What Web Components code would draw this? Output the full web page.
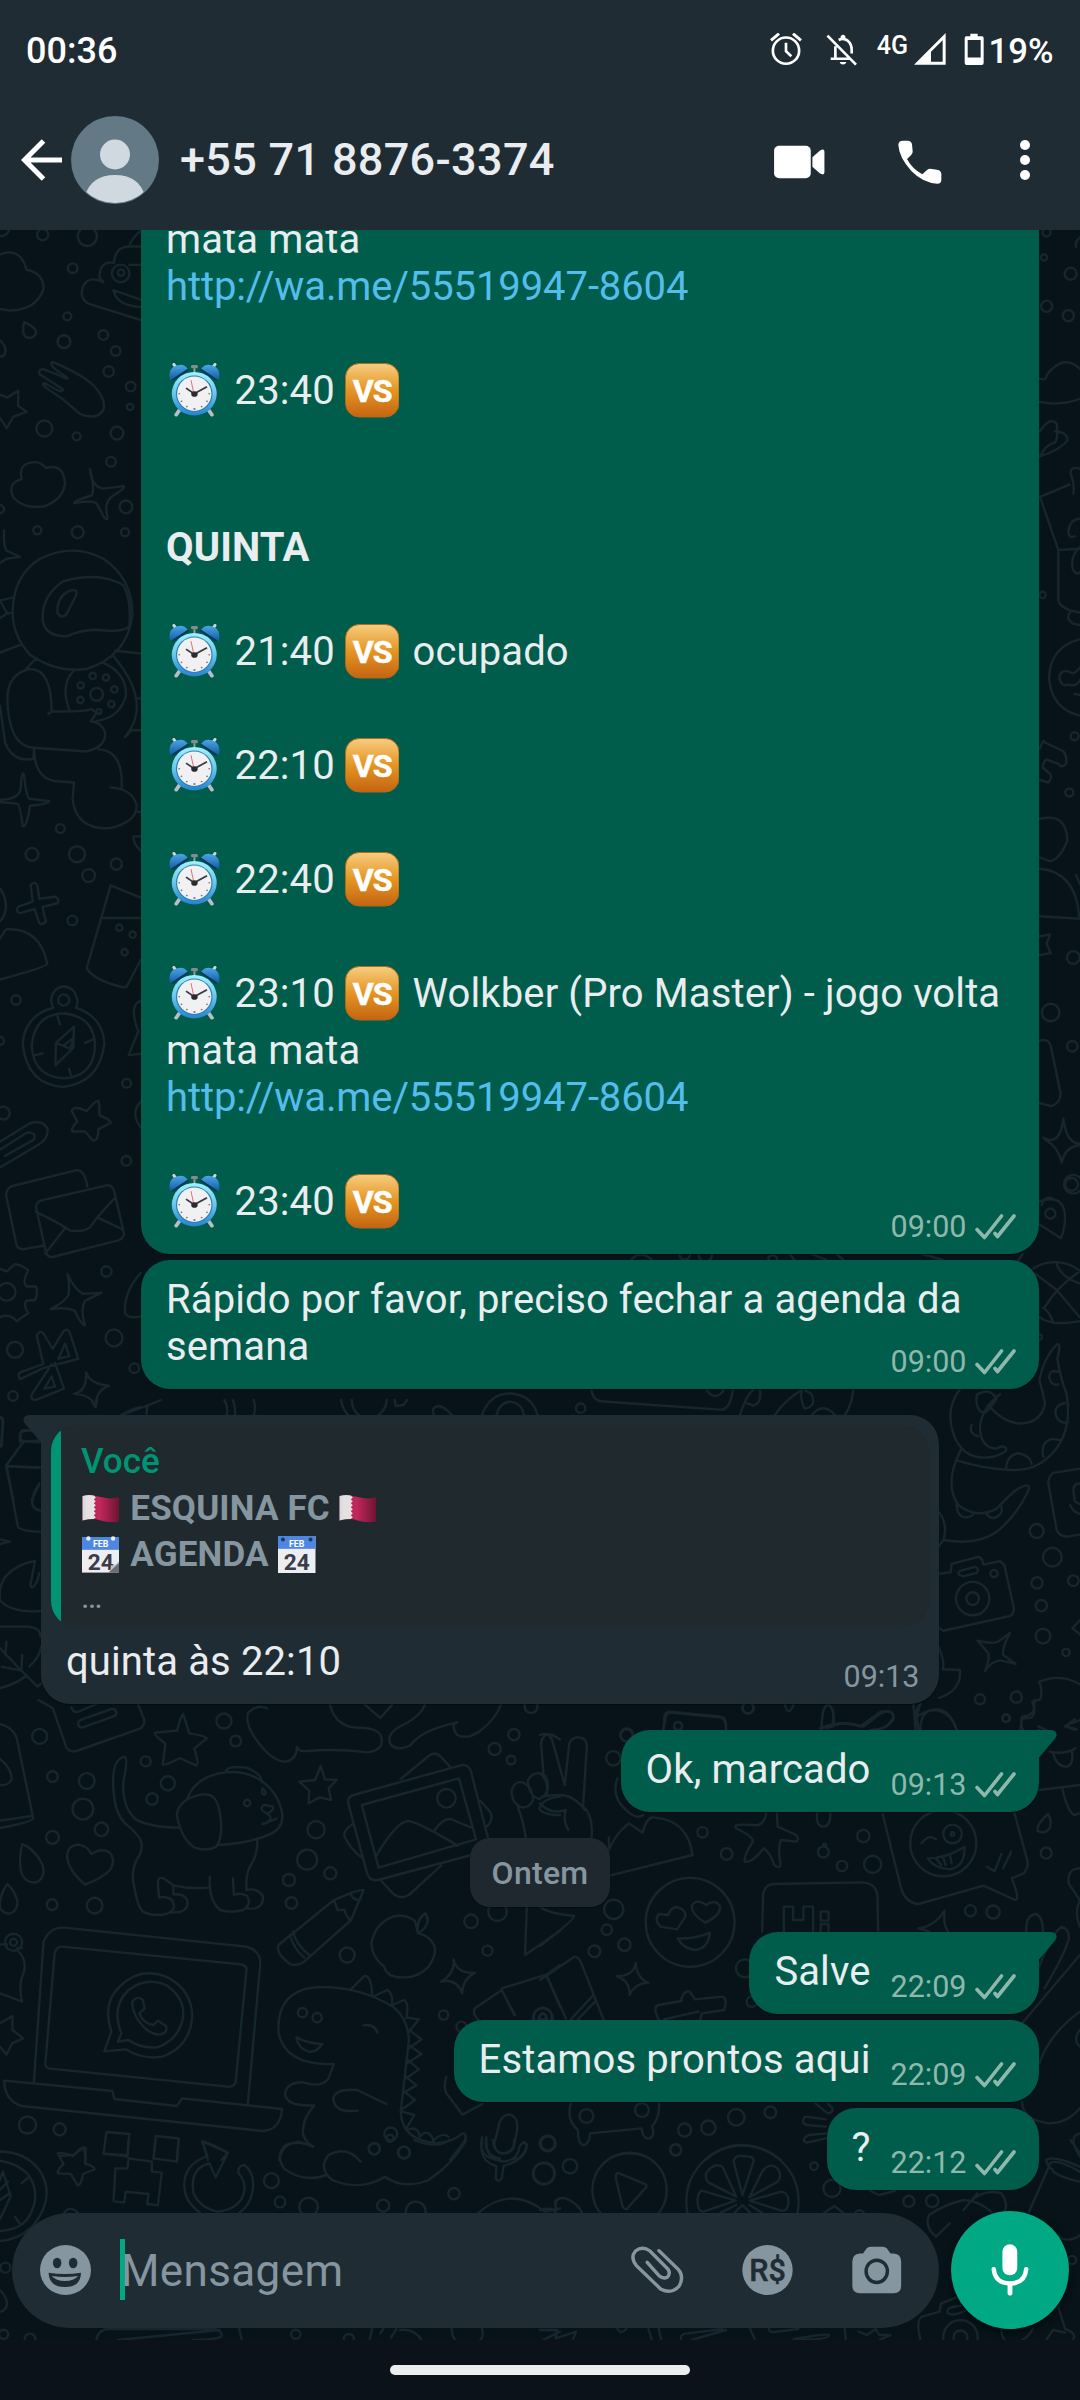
<!DOCTYPE html>
<html lang="pt-BR">
<head>
<meta charset="utf-8">
<title>Conversa</title>
<style>
html,body{margin:0;padding:0;background:#0b1219}
body{width:1080px;height:2400px;overflow:hidden;font-family:Roboto,"Liberation Sans",sans-serif}
</style>
</head>
<body>
<chat-screen>
  <status-bar slot="top" time="00:36" battery="19%"></status-bar>
  <chat-header slot="top">+55 71 8876-3374</chat-header>

  <chat-bubble wide time="09:00" style="--gap:0px"><chat-line>mata mata</chat-line><chat-line><chat-link>http://wa.me/55519947-8604</chat-link></chat-line><chat-line></chat-line><chat-line emoji><emoji-icon name="clock"></emoji-icon> 23:40 <emoji-icon name="vs"></emoji-icon></chat-line><chat-line></chat-line><chat-line tall></chat-line><chat-line><b>QUINTA</b></chat-line><chat-line></chat-line><chat-line emoji><emoji-icon name="clock"></emoji-icon> 21:40 <emoji-icon name="vs"></emoji-icon> ocupado</chat-line><chat-line></chat-line><chat-line emoji><emoji-icon name="clock"></emoji-icon> 22:10 <emoji-icon name="vs"></emoji-icon></chat-line><chat-line></chat-line><chat-line emoji><emoji-icon name="clock"></emoji-icon> 22:40 <emoji-icon name="vs"></emoji-icon></chat-line><chat-line></chat-line><chat-line emoji><emoji-icon name="clock"></emoji-icon> 23:10 <emoji-icon name="vs"></emoji-icon> Wolkber (Pro Master) - jogo volta</chat-line><chat-line>mata mata</chat-line><chat-line><chat-link>http://wa.me/55519947-8604</chat-link></chat-line><chat-line></chat-line><chat-line emoji><emoji-icon name="clock"></emoji-icon> 23:40 <emoji-icon name="vs"></emoji-icon></chat-line></chat-bubble>
  <chat-bubble wide time="09:00" style="--gap:6px"><chat-line>Rápido por favor, preciso fechar a agenda da</chat-line><chat-line>semana</chat-line></chat-bubble>
  <chat-bubble incoming tail time="09:13" style="--gap:26px"><quoted-message slot="quote" author="Você"><quote-line><emoji-icon name="flag" small></emoji-icon> <b>ESQUINA FC</b> <emoji-icon name="flag" small></emoji-icon></quote-line><quote-line><emoji-icon name="cal" small></emoji-icon> <b>AGENDA</b> <emoji-icon name="cal2" small></emoji-icon></quote-line><quote-line last>…</quote-line></quoted-message><chat-line>quinta às 22:10</chat-line></chat-bubble>
  <chat-bubble tail time="09:13" style="--gap:26px"><chat-line>Ok, marcado</chat-line></chat-bubble>
  <date-chip>Ontem</date-chip>
  <chat-bubble tail time="22:09" style="--gap:25px"><chat-line>Salve</chat-line></chat-bubble>
  <chat-bubble time="22:09" style="--gap:6px"><chat-line>Estamos prontos aqui</chat-line></chat-bubble>
  <chat-bubble time="22:12" style="--gap:6px"><chat-line>?</chat-line></chat-bubble>

  <message-composer slot="bottom" placeholder="Mensagem"></message-composer>
  <gesture-bar slot="nav"></gesture-bar>
</chat-screen>

<script>
const define = (name, render) => customElements.define(name, class extends HTMLElement {
  constructor(){ super(); this.attachShadow({mode:'open'}); }
  connectedCallback(){ this.shadowRoot.innerHTML = render(this); }
});

define('chat-screen', () => `<style>
:host{display:flex;flex-direction:column;width:1080px;height:2400px}
.top{display:flex;flex-direction:column;height:230px;background:#1f2c34}
.room{display:grid;height:2110px;grid-template:2110px / 1080px;overflow:hidden}
.room>*{grid-area:1/1}
.col{display:flex;flex-direction:column;min-height:0;z-index:1}
.list{flex:1;min-height:0;display:flex;flex-direction:column;justify-content:flex-end;align-items:flex-end;padding:0 41px;overflow:hidden}
</style><div class="top"><slot name="top"></slot></div>
<div class="room"><chat-wallpaper></chat-wallpaper><div class="col"><div class="list"><slot></slot></div><slot name="bottom"></slot></div></div>
<slot name="nav"></slot>`);

define('status-bar', e => `<style>
:host{display:flex;align-items:flex-start;height:100px;padding:30px 26px 0 26px;box-sizing:border-box;color:#fff;font-weight:500;font-size:36px;line-height:42px}
.sp{flex:1}svg{flex:none;margin-top:3.4px}
.g{font-size:25px;line-height:26px;margin:0 6px 0 19.5px;width:31px;padding-top:3px;white-space:nowrap}
.b{margin-left:4.5px;width:65.500px;text-align:left;font-size:34.700px;white-space:nowrap}
</style><span>${e.getAttribute('time')}</span><span class="sp"></span>
<svg width="32" height="32.6" viewBox="208 100 96 98" fill="none" stroke="#fff" stroke-width="8"><circle cx="256" cy="153" r="39.5"/><path d="M256 129v26l16 15"/><path d="M211 122l24-20M277 102l24 20" stroke-width="9"/></svg>
<svg style="margin-left:24px" width="31.4" height="32.6" viewBox="376 100 94 98" fill="none" stroke="#fff" stroke-width="8"><path d="M380 108L466 195M404 140V178M390 177.500H446M414 121Q428 113 441 123Q453 133 453 150V162"/><path d="M420 118v-8q7-9 14 0v8zM417 187h20q-2 8-10 8t-10-8z" fill="#fff" stroke="none"/></svg>
<span class="g">4G</span>
<svg width="32" height="32" viewBox="640 100 96 96"><path fill="#fff" fill-rule="evenodd" d="M640 195L735 100V195ZM691 156V186H726V122Z"/></svg>
<svg style="margin-left:18.300px" width="20" height="32.6" viewBox="790 100 60 98"><path fill="#fff" fill-rule="evenodd" d="M797 110H809V102H831V110H844Q849 110 849 116V190Q849 196 843 196H798Q792 196 792 190V116Q792 110 797 110ZM801 121V174H840V121Z"/></svg>
<span class="b">${e.getAttribute('battery')}</span>`);

define('chat-header', () => `<style>
:host{display:flex;align-items:center;height:120px;padding:0 20px 0 21px;color:#e9edef;font-weight:500;font-size:45px;line-height:54px}
svg{flex:none;display:block}.av{margin-left:9px}.n{margin-left:21px;flex:1;white-space:nowrap;letter-spacing:.32px}
</style>
<svg width="41" height="42" viewBox="0 0 41 42" fill="none" stroke="#fff" stroke-width="5"><path d="M22.500 2L3.500 21L22.500 40M4 21H41"/></svg>
<svg class="av" width="88" height="88" viewBox="0 0 88 88"><defs><clipPath id="c"><circle cx="44" cy="44" r="43"/></clipPath></defs><circle cx="44" cy="44" r="44" fill="#637985"/><g fill="#d0d8e0" clip-path="url(#c)"><circle cx="44" cy="38.500" r="15"/><path d="M14 80Q20 59 44 59T74 80V90H14Z"/></g></svg>
<span class="n"><slot></slot></span>
<svg style="margin-top:3px" width="50.500" height="34" viewBox="225 433 151 102" fill="#fff"><rect x="225" y="435" width="110" height="98" rx="15"/><path d="M340 470L362 450Q376 441 376 453V515Q376 526 362 518L340 498Z"/></svg>
<svg style="margin:3px 78.500px 0 73px" width="44" height="44" viewBox="595 418 132 132" fill="#fff"><path d="M610 420H624Q635 420 637 431L639 452Q640 458 634 464L622 475Q638 505 668 521L682 508Q686 504 692 504L712 507Q724 508 725 520V537Q725 549 713 549Q670 547 635 511Q598 470 596 433Q596 420 610 420Z"/></svg>
<svg style="margin-right:30px" width="10" height="40" viewBox="0 0 10 40" fill="#fff"><circle cx="5" cy="5" r="5"/><circle cx="5" cy="20" r="5"/><circle cx="5" cy="35" r="5"/></svg>`);

define('chat-line', () => `<style>
:host{display:block;height:47px;line-height:47px;font-size:40px;letter-spacing:.12px;white-space:pre}
:host([emoji]){height:67px;line-height:67px}
:host([tall]){height:53px}
</style><slot></slot>`);
define('chat-link', () => `<style>:host{color:#53bdeb;letter-spacing:-.1px}</style><slot></slot>`);

define('chat-bubble', e => {
  const inc = e.hasAttribute('incoming'), wide = e.hasAttribute('wide') || inc;
  const tail = !e.hasAttribute('tail') ? '' : inc
    ? `<svg class="tail in" width="20" height="30" viewBox="0 0 20 30"><path fill="#1f2c34" d="M20 0H6Q-2 1 1.500 8L20 30Z"/></svg>`
    : `<svg class="tail out" width="20" height="30" viewBox="0 0 20 30"><path fill="#005c4b" d="M0 0H14Q22 1 18.500 8L0 30Z"/></svg>`;
  const check = inc ? '' : `<svg width="41" height="26" viewBox="0 0 41 26" fill="none" stroke="currentColor" stroke-width="3.600" stroke-linecap="round"><path d="M2 15.500L9.500 23.500L26.500 2M20 19.500L22.500 22.500L39 2" stroke-linejoin="round"/></svg>`;
  return `<style>
:host{display:block;flex:none;position:relative;box-sizing:border-box;margin-top:var(--gap);border-radius:29px;background:#005c4b;color:#e9edef;box-shadow:0 1px 1px #0006;padding:16px 23px 0 25px}
:host([wide]){width:898px}
:host([incoming]){width:898px;align-self:flex-start;background:#1f2c34;padding:10px 10px 0;margin-right:100px}
:host([tail]){border-top-right-radius:0}
:host([tail][incoming]){border-radius:0 29px 29px 29px}
.body{display:grid;grid-template-columns:${wide?'1fr':'auto auto'}}
.text{grid-area:1/1;padding-bottom:19px}
.meta{grid-area:1/${wide?1:2};justify-self:end;align-self:end;display:flex;align-items:flex-start;gap:8.500px;font-size:30.500px;line-height:36px;height:45px;margin-left:20px;color:${inc?'#8696a0':'#8fb8ad'}}
.meta svg{margin-top:4.500px;display:block}
:host([incoming]) .body{padding:11px 9.500px 0 15px}
.tail{position:absolute;top:0}.tail.in{left:-18px}.tail.out{right:-18px}
</style>${tail}<slot name="quote"></slot><div class="body"><div class="text"><slot></slot></div><div class="meta"><span>${e.getAttribute('time')}</span>${check}</div></div>`;
});

define('quoted-message', e => `<style>
:host{display:flex;height:202px;border-radius:26px;background:#1f292e;overflow:hidden;color:#8696a0}
.bar{width:10px;background:#009473;flex:none}
.c{padding:14px 0 0 20px}.a{color:#009473;font-weight:500;font-size:35px;line-height:46px;height:47px}
</style><div class="bar"></div><div class="c"><div class="a">${e.getAttribute('author')}</div><slot></slot></div>`);
define('quote-line', () => `<style>:host{display:block;white-space:pre;height:46px;line-height:46px;font-size:35px;letter-spacing:.15px}:host([last]){font-size:32px;margin-top:-4px}</style><slot></slot>`);

define('date-chip', () => `<style>:host{display:block;flex:none;align-self:center;margin-top:26px;height:69px;width:140px;border-radius:20px;background:#1e282e;box-shadow:0 1px 1px #0006;color:#8696a0;font-weight:500;font-size:32px;letter-spacing:.25px;line-height:70px;text-align:center}</style><slot></slot>`);

const cal = fold => `<svg viewBox="0 0 38 38" preserveAspectRatio="none"><rect y="${fold?1:0}" width="38" height="${fold?37:38}" fill="#eceef2"/><rect y="${fold?1:0}" width="38" height="13" fill="#4d87e0"/><text x="19" y="11" text-anchor="middle" font-size="9" font-weight="700" fill="#fff" letter-spacing="0">FEB</text><text x="19" y="34" text-anchor="middle" font-size="23" font-weight="700" fill="#3b3b49" letter-spacing="0">24</text>${fold?'<path d="M25 38Q30 35 29 30Q34 30 38 25V38Z" fill="#bfc2c9"/><path d="M27 37L38 27V38Z" fill="#6d6e75"/><path d="M0 37.300H38" stroke="#777b85"/><circle cx="6.500" cy="2.500" r="2.200" fill="#e9edf3"/><circle cx="31.500" cy="2.500" r="2.200" fill="#e9edf3"/>':'<circle cx="5" cy="3.500" r="2" fill="#1c3764"/><circle cx="33" cy="3.500" r="2" fill="#1c3764"/>'}</svg>`;
const art = {
clock:`<svg viewBox="123 428 143 165" preserveAspectRatio="none"><defs><linearGradient id="a" x2="0" y2="1"><stop stop-color="#a5f1fb"/><stop offset=".5" stop-color="#67c6ee"/><stop offset="1" stop-color="#2382d0"/></linearGradient><linearGradient id="b" x2="0" y2="1"><stop stop-color="#4aa6e8"/><stop offset="1" stop-color="#125a9f"/></linearGradient></defs>
<path d="M156 570l-9 15M232 570l9 15" stroke="#b9bec4" stroke-width="10" stroke-linecap="round"/><path d="M141 432l7 12M249 432l-7 12" stroke="#d2d6da" stroke-width="8" stroke-linecap="round"/>
<path d="M131 480Q125 448 143 438Q165 425 178 446Z" fill="url(#b)"/><path d="M259 480Q265 448 247 438Q225 425 212 446Z" fill="url(#b)"/><path d="M137 480L180 447M253 480L210 447" stroke="#0b3760" stroke-width="6"/>
<rect x="186" y="434" width="18" height="10" rx="4" fill="#858b90"/><path d="M195 444v12" stroke="#999fa4" stroke-width="5"/>
<ellipse cx="194.500" cy="521" rx="59" ry="66" fill="url(#a)"/><ellipse cx="194.500" cy="521" rx="48" ry="55" fill="#2c7fae"/><ellipse cx="194.500" cy="521" rx="45" ry="52" fill="#f1f1f3"/>
<g fill="#77787c"><circle cx="155" cy="521" r="2.500"/><circle cx="234" cy="521" r="2.500"/><circle cx="195" cy="567" r="3"/><circle cx="161" cy="544" r="2.500"/><circle cx="228" cy="544" r="2.500"/><circle cx="175" cy="560" r="2.500"/><circle cx="214" cy="560" r="2.500"/></g>
<path d="M193 518L186 480" stroke="#e35d62" stroke-width="2.500"/><path d="M194 521L173 504M194 521L228 500" stroke="#3c3e44" stroke-width="5"/><circle cx="195" cy="522" r="8.500" fill="#292b30"/></svg>`,
vs:`<svg viewBox="0 0 55 55"><defs><linearGradient id="a" x2="0" y2="1"><stop stop-color="#f7cd80"/><stop offset=".5" stop-color="#e49522"/><stop offset="1" stop-color="#c46413"/></linearGradient></defs><rect x=".5" y=".5" width="54" height="54" rx="14" fill="url(#a)" stroke="#b76a14"/><text x="27.500" y="39.500" text-anchor="middle" font-size="32.500" font-weight="700" fill="#fff" stroke="#fff" stroke-width=".5" letter-spacing="-1">VS</text></svg>`,
flag:`<svg viewBox="0 0 38 38"><defs><linearGradient id="a"><stop stop-color="#d6d6d8"/><stop offset=".3" stop-color="#e5e0e2"/></linearGradient><linearGradient id="b"><stop stop-color="#a61b49"/><stop offset=".45" stop-color="#c3285d"/><stop offset="1" stop-color="#6e1530"/></linearGradient></defs><path d="M.500 6Q8 4 19 7T37.500 7V32Q28 34 19 31T.500 31Z" fill="url(#b)"/><path d="M.500 6Q7 4.500 12 5.500l2 2-2 2 2 2-2 2 2 2-2 2 2 2-2 2 2 2-2 2 2 2-2 2Q6 29.500.500 31Z" fill="url(#a)"/></svg>`,
cal:cal(true), cal2:cal(false)};
define('emoji-icon', e => `<style>:host{display:inline-block;width:54.500px;height:54.500px;margin:0 3.500px 0 .5px;vertical-align:-13.500px;line-height:0}:host([name=vs]){margin:0 3.500px 0 -.3px}:host([small]){width:37.500px;height:37.500px;margin:0 2.300px 0 .7px;vertical-align:-7px}svg{display:block;width:100%;height:100%}</style>${art[e.getAttribute('name')]}`);

define('message-composer', e => `<style>
:host{display:flex;flex:none;height:150px;box-sizing:border-box;padding:21px 11px 11px 12px;align-items:center;gap:12px}
.pill{flex:1;height:115px;border-radius:58px;background:#1f2c34;display:flex;align-items:center;padding:0 37.500px 0 28px;box-sizing:border-box}
svg{display:block;flex:none}
.cur{width:5px;height:61px;background:#00a884;margin:-2px 0 0 29px}
.ph{flex:1;font-size:44px;line-height:54px;color:#8696a0;margin:2px 0 0 -4px;letter-spacing:.38px;z-index:1}
.mic{width:118px;height:118px;border-radius:50%;background:#00a884;display:grid;place-items:center;box-shadow:0 3px 6px #0008}
</style><div class="pill">
<svg width="51" height="50" viewBox="112 315 143 150" preserveAspectRatio="none"><ellipse cx="183.500" cy="390" rx="71.500" ry="75" fill="#8696a0"/><g fill="#1f2c34"><ellipse cx="160" cy="369" rx="12" ry="16"/><ellipse cx="205" cy="369" rx="12" ry="16"/><path d="M136 398Q182 406 227 398Q226 441 182 441Q138 441 136 398Z"/></g><path d="M145 408Q182 414 219 408Q207 423 182 423Q157 423 145 408Z" fill="#8696a0"/></svg>
<div class="cur"></div><div class="ph">${e.getAttribute('placeholder')}</div>
<svg width="54.400" height="49.300" viewBox="262 316 158 148" preserveAspectRatio="none" fill="none" stroke="#8696a0" stroke-width="10" stroke-linecap="round"><path d="M346 333L402 389Q420 411 405 439Q383 465 352 449L280 377Q262 353 278 334Q298 317 320 334L372 388Q381 402 370 413Q359 419 346 408L312 368"/></svg>
<svg style="margin-left:58px" width="51" height="50" viewBox="0 0 51 50"><ellipse cx="25.500" cy="25" rx="25.200" ry="25" fill="#8696a0"/><text x="25.500" y="36" text-anchor="middle" font-size="30.500" font-weight="500" fill="#1f2c34" stroke="#1f2c34" stroke-width=".5">R$</text></svg>
<svg style="margin-left:59px" width="49.500" height="48" viewBox="908 316 144 142" preserveAspectRatio="none"><path fill="#8696a0" d="M931 338H940L951 323Q955 318 962 318H998Q1005 318 1009 323L1020 338H1029Q1051 340 1051 362V434Q1051 456 1029 456H931Q909 456 909 434V362Q909 340 931 338Z"/><ellipse cx="980" cy="391" rx="31" ry="33" fill="none" stroke="#1f2c34" stroke-width="10"/></svg>
</div><div class="mic"><svg width="38" height="52" viewBox="1310 314 110 153" preserveAspectRatio="none" fill="none" stroke="#fff" stroke-linecap="round"><rect x="1343" y="315" width="43" height="91" rx="21.500" fill="#fff" stroke="none"/><path d="M1318 388Q1322 430 1365 430T1412 388" stroke-width="13"/><path d="M1365 432V459" stroke-width="14"/></svg></div>`);

define('gesture-bar', () => `<style>:host{display:flex;height:60px;background:#0b1219;justify-content:center;padding-top:25px;box-sizing:border-box}div{width:300px;height:10px;border-radius:5px;background:#eceeee}</style><div></div>`);

/* Doodle sheets: [x, y, scaleX, scaleY, paths, rings as cx,cy,r]. */
const sheets = [
[0,1700,2.8,3,`M108 0L148 25L186 143Q196 158 214 153L392 86Q408 74 403 56L386 12M200 22Q205 40 222 34L270 12M218 72Q218 62 230 58L312 27Q324 26 326 36Q328 44 318 49L232 82Q222 84 218 72Z
M513 42Q505 50 496 92L434 98Q430 104 463 131L456 193Q464 197 503 174L550 197Q558 194 544 146L579 115Q578 108 530 100Z
M0 72Q32 80 46 110L93 355Q90 366 0 384M0 362L88 348M0 176Q36 210 32 240Q22 258 0 255
M348 170Q360 175 346 240Q340 320 380 358Q420 382 505 383M348 170Q310 180 318 275Q322 340 350 370Q394 408 396 430Q400 455 382 480Q366 520 375 555Q385 620 400 635Q425 650 465 642Q498 630 482 602Q470 588 445 592L442 545Q446 525 465 540L485 556L486 583Q515 580 524 600Q530 625 505 636L480 638M485 556Q530 568 588 562M588 530Q582 600 616 630Q650 640 680 630Q706 615 692 588Q676 576 655 585L652 535M720 415Q724 460 700 500Q688 520 690 570Q720 562 736 588Q740 616 715 625L693 626M610 435Q700 430 755 403Q795 386 790 340Q780 280 735 245Q690 210 630 217Q545 230 524 298M632 213Q640 196 690 203Q735 222 732 246M524 298Q490 325 496 352Q510 420 545 443Q580 455 606 440Q625 410 617 350Q610 285 580 284Q560 280 524 298M735 318Q728 330 740 336L750 342L764 328Q768 316 752 318Q742 312 735 318M750 342Q765 355 752 362M774 356L752 366L735 372M735 265Q730 280 740 284Q750 278 735 265
M898 198L882 240L838 245L866 272L864 310L895 292L927 300L920 265L943 240L910 238Z
M238 554Q190 510 188 470Q188 435 222 434Q246 440 256 462Q285 442 308 458Q325 480 308 510Q285 535 238 554ZM62 432Q50 490 62 525Q76 552 104 546Q130 530 118 492Q95 445 62 432ZM20 552Q-4 590 0 625Q20 650 38 635Q55 615 45 590Q35 565 20 552
M990 285L1290 196Q1308 190 1318 212L1366 412M975 310Q972 292 990 285M975 310L1028 520Q1036 545 1058 540L1320 465M1013 315L1285 235L1333 418L1060 503ZM1052 470Q1110 365 1142 363Q1170 365 1282 437M1216 393Q1238 355 1262 357L1318 382M1122 237L1200 168Q1220 152 1236 172L1260 200M988 372Q960 390 965 410Q980 445 1012 472M1068 543L1100 580Q1120 600 1145 585L1235 497M1345 302L1372 335Q1385 360 1360 382
M748 25Q720 12 695 38Q685 70 715 115Q760 185 800 185Q830 180 832 140Q834 156 860 153Q940 145 1030 157Q1080 150 1066 105Q1055 85 1010 83Q940 85 924 14M1022 14L1065 54L1098 14M1190 12Q1180 50 1110 85Q1080 110 1095 135Q1115 155 1150 135Q1180 90 1280 67Q1260 75 1280 105Q1310 120 1345 92Q1390 55 1403 12
M1530 275Q1538 255 1522 225L1515 130Q1520 98 1545 104L1568 118M1478 240Q1490 218 1512 220Q1536 225 1534 262Q1530 290 1510 297Q1480 288 1478 240M1432 275Q1440 240 1465 248Q1492 260 1493 300Q1482 325 1460 322Q1434 312 1432 275M1450 322Q1465 360 1472 412M1568 290Q1520 295 1510 325Q1520 345 1568 345
M1018 570Q1010 565 935 600L780 735Q770 760 812 792Q830 800 852 785L983 660ZM935 600L945 630L965 630Q970 655 983 660M983 585Q995 605 1010 598M820 695Q830 735 866 765M812 705Q822 745 852 773
M1162 662Q1130 640 1100 650Q1050 670 1040 730Q1040 770 1075 800Q1085 835 1130 832Q1170 834 1200 800Q1225 760 1215 735Q1200 704 1170 700ZM1170 700Q1165 655 1192 640Q1210 675 1170 700
M1270 778Q1275 820 1235 845Q1280 835 1294 880Q1295 838 1330 818Q1278 822 1270 778
M95 1145L122 725Q140 680 180 683L690 740Q735 755 728 800L694 1210M127 1090L153 760Q158 738 175 740L675 793Q692 798 690 810L660 1145Q655 1162 638 1160L140 1106Q126 1103 127 1090M12 1142L315 1173L320 1197L495 1218L510 1195L790 1227Q785 1290 735 1293L60 1218Q12 1200 12 1142Z
M292 1054L312 995Q285 910 335 860Q390 800 465 830Q540 870 538 955Q530 1040 455 1070Q400 1080 352 1048ZM330 1025L340 1000Q310 920 360 870Q410 830 465 855Q520 895 512 955Q500 1020 440 1042Q390 1045 360 1020ZM370 905Q385 885 400 900L405 925L390 940Q400 970 430 975L442 962L465 978Q470 995 455 1002Q420 1010 390 965Q370 935 370 905Z
M877 1340Q840 1315 850 1280Q850 1255 880 1216Q800 1220 798 1180Q805 1145 850 1147Q900 1165 920 1135L935 1092Q800 1098 780 1000Q772 875 880 862Q1000 855 1100 920Q1142 955 1145 1020L1122 1235Q1125 1320 1220 1330Q1270 1325 1295 1300Q1310 1300 1300 1325L1260 1380M985 865L1020 828Q1040 825 1042 888M1048 888L1085 870Q1100 880 1098 912M1100 915L1130 900Q1146 905 1138 955M1138 952L1173 958L1145 995M1146 990L1180 1018L1145 1045M1145 1035L1180 1062L1142 1088M1140 1078L1173 1108L1138 1135M1135 1128L1166 1156L1130 1178M1128 1172L1162 1200L1126 1228M1125 1235L1160 1245L1138 1285M1140 1290Q1170 1275 1175 1310M1175 1310Q1200 1280 1215 1325M1212 1322Q1240 1295 1255 1310M830 1012Q860 1030 902 1032Q885 1060 862 1054Q835 1045 830 1012M1002 1232Q935 1240 933 1195Q940 1165 1000 1170L1082 1212M1018 976Q1048 970 1057 998
M0 733H20M62 745Q50 740 45 748Q78 775 66 820Q50 855 62 905L0 880M0 970L35 948L35 990L65 1015L34 1030L18 1064L0 1040
M1475 622L1470 765L1568 692M1440 945L1405 870L1330 925Q1320 938 1340 960M1405 865L1530 824L1568 795M1530 824L1568 920M1410 880L1422 905M1430 920L1442 945
M1250 1130Q1240 1160 1250 1180L1295 1244L1350 1212M1395 1285Q1400 1245 1425 1243Q1452 1248 1448 1290L1438 1345Q1425 1365 1400 1360Q1380 1345 1385 1325ZM1350 1312Q1335 1375 1400 1380M1362 1312Q1350 1365 1400 1375M1460 1332Q1470 1320 1475 1335Q1470 1375 1440 1378
M298 1296L362 1302L357 1365L290 1362ZM436 1308L500 1315L496 1378M436 1308L430 1378M568 1325L638 1358L620 1380M568 1325L582 1380M166 1368L205 1365L235 1343L240 1380M782 1380Q790 1330 835 1325L877 1340M0 1355Q50 1355 80 1380`,
"111,109,21 627,63,21 660,123,15 408,184,14 147,230,15 243,243,22 470,250,20 426,297,16 232,327,29 284,388,19 147,412,18 146,614,15 265,617,22 885,389,24 860,479,28 925,520,17 809,540,17 816,609,16 972,765,21 1319,664,19 1365,752,14 1385,147,17 1439,104,16 1431,180,12 1250,295,26 692,309,9 847,938,13 888,953,13 1242,945,13 1292,980,14 77,1275,24 167,1288,17 1094,1302,18 1048,1347,15 1131,1357,16 1534,1330,20 38,727,24 38,727,10 1520,955,28 1520,955,12 1487,20,18 1393,635,26"],
[540,1700,2.904,3,`M0 105Q25 95 35 120L72 255L85 130Q95 105 125 115Q140 125 135 155L125 320Q155 345 150 412M0 220Q25 240 20 285M0 310Q30 345 75 330Q65 360 82 390M5 290Q60 280 85 290Q120 310 130 330
M358 88L362 45Q368 33 385 36L525 50Q540 58 540 85M225 235Q205 290 250 330Q280 360 300 345M200 450Q220 400 258 370L298 398Q310 350 330 352Q430 360 443 465L205 526M200 412V450
M818 75Q820 10 840 15Q858 30 850 70M835 85Q870 60 940 80L990 40Q1025 25 1028 55Q1010 90 960 90M1085 15L1090 90M1105 88Q1105 35 1140 30Q1190 30 1210 88M1105 88Q1085 60 1105 12M1395 90L1400 50Q1440 45 1435 15L1437 0M1448 90L1470 100M1568 60L1525 78L1555 90M1480 155Q1520 165 1555 145M1490 160Q1500 200 1530 200Q1550 195 1545 155M1450 270L1568 255M1517 265Q1530 330 1550 345L1568 340
M657 340Q650 380 620 375Q555 370 570 385Q620 410 618 425Q590 470 595 485Q615 490 650 445Q670 460 680 495Q700 510 698 490Q690 440 700 420L745 425Q755 410 738 402L690 380L688 340M805 340Q800 380 825 380Q845 375 843 340
M995 342L1050 570Q1065 610 1100 612L1288 557L1380 600Q1395 600 1370 535L1405 520Q1420 500 1415 480L1378 340M1126 475Q1180 475 1233 440Q1235 500 1190 508Q1145 505 1126 475M1150 475L1165 495M1170 470L1178 495M1190 462L1195 490M1108 430Q1130 400 1150 418M1298 500L1320 514L1340 462M1345 505L1368 455
M1475 342Q1440 375 1445 392Q1465 405 1480 385Q1488 360 1475 342M398 688L350 680Q330 660 345 642L372 645Q380 620 400 622Q425 630 422 650ZM480 668Q435 640 442 615Q455 595 482 615Q510 595 523 620Q525 645 480 668ZM400 715Q450 718 493 698Q490 745 450 750Q415 745 400 715Z
M645 695L648 580Q655 552 680 552L940 547Q978 552 980 590L982 692M708 695V620H735V660H765V620H793V692M815 635H838V662H815ZM815 695V672H838V692
M1175 632Q1145 680 1098 685Q1130 692 1130 695M1175 632Q1170 675 1185 695M278 788Q272 830 222 828Q262 842 260 885Q275 850 315 848Q280 835 278 788M0 620Q20 640 100 648Q105 655 0 738M0 840L100 770Q112 770 120 790L185 960M18 825L75 955M90 958L155 885M110 958L160 905
M345 958Q325 920 345 915L410 903Q415 870 435 875L450 898L530 890Q545 895 535 930L470 940L465 960M360 958L460 935M1412 695Q1410 645 1440 642Q1462 650 1460 700M1450 800Q1485 700 1515 680Q1540 690 1535 720Q1520 770 1465 865M1568 765L1400 970M1568 935Q1480 1000 1450 1090M1568 505Q1530 505 1535 550L1568 600M1568 600Q1550 640 1568 680M1400 1205Q1400 1260 1480 1270Q1530 1270 1568 1225M1568 1300Q1530 1310 1568 1370M1568 990Q1545 1020 1568 1040
M90 1208Q75 1260 110 1290Q110 1335 128 1335Q145 1330 145 1300L295 1285Q300 1320 320 1315Q335 1305 325 1280Q350 1250 345 1208M800 1210L835 1240Q850 1240 850 1225L835 1210M830 1258L770 1250Q755 1270 775 1275L830 1280M830 1300L780 1305Q755 1320 775 1328L830 1315M480 1380Q580 1290 700 1380M210 1370Q260 1350 310 1370`,
"436,667,129 1171,430,96 1198,402,27 1198,402,5 252,105,19 213,175,21 401,78,12 604,24,16 472,397,15 542,462,17 823,456,16 939,408,18 877,498,15 966,493,25 1470,459,16 1250,632,16 1316,636,19 214,628,28 194,689,15 245,734,18 158,754,17 1354,55,11 8,950,26 8,950,9 135,1248,20 296,1230,20 420,1290,19 489,1283,21 570,1252,24 669,1237,17 23,1330,22 394,1350,16 595,805,26 615,905,15 826,435,4"],
[0,220,3,2.45,`M0 84Q60 65 80 122Q130 130 131 168Q110 220 30 222L0 218M0 40Q20 40 28 24M73 250Q60 290 92 289Q112 285 107 270Q100 260 73 250M0 295Q20 310 16 325Q10 338 0 333M0 428L22 435L55 418L54 455L80 470L40 482L20 510L0 485
M420 28Q390 50 388 65M422 65H388Q345 65 342 105Q300 98 298 140L310 152Q265 135 250 162Q235 190 265 205L422 245M340 172Q350 210 422 213M340 172L422 195M388 110H422
M128 365Q110 370 122 380L188 414Q190 425 165 414L135 400Q120 400 140 412L190 440L240 475Q290 492 310 465Q320 440 280 405Q250 380 160 348Q145 350 165 365L200 385Q210 395 170 378Z
M65 635Q55 600 90 595Q120 588 138 608Q190 595 195 645Q190 685 130 702Q70 708 40 680Q20 645 65 635Z
M270 610Q275 655 310 658L370 652Q380 655 340 675Q310 690 322 725Q325 740 312 728L290 695Q275 685 222 694Q220 688 275 675Q285 660 270 610M12 760Q10 800 20 810L60 825L20 830L0 840
M38 960Q40 870 120 830Q220 790 310 830Q400 880 397 970Q380 1070 260 1100Q170 1110 90 1065Q38 1020 38 960ZM128 980Q125 920 190 885Q300 860 370 895Q395 930 388 995Q370 1012 290 1004Q240 1005 200 1020Q135 1020 128 980M172 962Q170 925 205 910Q235 900 228 920L200 965Q185 980 172 962M38 925L0 932L22 965L38 960M0 975L20 965M0 1060L65 1040M110 1073L78 1100M345 1055L422 1062M340 1068Q415 1140 410 1200Q410 1230 375 1267L395 1250H422
M145 1210L155 1205Q155 1100 90 1100Q25 1110 22 1170Q25 1290 100 1293L260 1302Q320 1290 315 1255Q305 1230 272 1228L290 1208L275 1198Q260 1205 155 1204M208 1200Q180 1140 220 1105M310 1085Q380 1110 378 1165Q360 1220 290 1227M0 1190L15 1280Q40 1330 100 1320L102 1298Q105 1370 170 1375L222 1378L218 1420Q230 1495 330 1490Q410 1475 410 1435Q400 1395 332 1390M365 1390Q370 1300 295 1297M422 1172H412
M0 1420Q60 1420 62 1390Q65 1345 72 1360Q80 1420 90 1418L148 1424Q140 1432 90 1435Q80 1490 68 1485Q60 1430 50 1430L0 1426M422 1510H400Q400 1530 422 1545M413 1450H422`,
"128,36,7 262,40,12 218,118,6 362,131,11 363,129,4 202,236,5 192,298,8 310,282,6 347,321,6 326,371,6.500 392,408,6 390,458,4 133,511,10 230,530,5 351,522,8 333,592,6 378,703,8 0,708,5 112,760,5 233,765,7.500 375,765,5 290,1162,8 278,1117,4 318,1121,4 343,1150,4 334,1186,4 297,1204,3 241,1176,4 242,1140,4 181,1491,5.500 96,1554,8 231,1554,10"],
[0,860,3,2.45,`M92 62Q102 50 112 62L118 95L165 90Q180 95 172 106L128 115Q130 130 138 150Q130 160 118 155L104 120L60 130Q45 128 55 114L98 102ZM0 70Q18 90 18 115Q15 140 0 150M0 192L18 170Q120 165 142 255Q140 262 0 293
M422 92L332 62L260 265Q280 295 370 312L380 310L422 245M308 142H422M68 450Q75 380 160 362Q145 340 165 320Q190 300 220 320Q240 345 228 362Q310 385 313 450Q300 545 190 556Q80 550 68 450ZM95 455Q105 375 195 376Q280 385 285 450Q285 530 190 535Q100 530 95 455ZM222 408L168 448L166 503L220 460ZM168 448L210 462L222 435L190 455M172 383L180 402M278 440L255 448M105 478L128 474M213 528L207 512M422 345Q385 355 415 420L386 478L422 475M422 592Q390 620 422 655
M295 590Q300 600 298 625Q340 640 330 645L295 660Q295 690 278 687L255 665L218 665Q210 660 232 640L215 615Q220 600 260 615Q285 590 295 590ZM0 690L90 645Q130 635 143 660Q145 685 110 700L0 753M0 710L80 668Q110 665 102 685L15 725
M18 820Q20 802 40 798L230 760Q255 760 262 800M18 820L50 945Q60 957 80 952L130 945M108 850Q110 837 125 834L320 797Q335 795 342 810L372 915Q370 928 355 932L160 972Q145 975 138 962ZM108 862Q180 890 210 908Q250 912 270 900Q295 870 345 828M135 965L195 902M298 878L368 905
M0 1002L20 1008L45 990Q60 990 85 1005Q65 1035 80 1045L108 1045Q115 1065 105 1078L78 1080Q70 1095 85 1110L50 1130Q30 1110 0 1120M203 1015Q225 1055 250 1063L305 1060L255 1080Q240 1100 255 1140Q240 1135 225 1105Q205 1095 152 1100Q200 1080 205 1065Q210 1045 203 1015M422 1012Q370 1060 375 1110Q385 1125 422 1118
M110 1165Q120 1150 130 1160L158 1198L190 1155Q205 1145 210 1160L235 1222L130 1245L60 1272Q50 1260 62 1255L130 1235ZM155 1235L95 1310Q90 1325 110 1322L192 1295L165 1232M195 1185L175 1222L208 1215ZM155 1265L133 1295L165 1290ZM258 1255Q270 1285 328 1288Q285 1300 288 1340Q275 1310 222 1308Q262 1300 258 1255M0 1365L10 1375L5 1435M365 1360Q380 1350 422 1340M60 1425V1405Q70 1395 115 1398M60 1425L115 1423M70 1425L18 1485L115 1490M18 1485L40 1568M118 1530L95 1568`,
"266,38,8 217,148,6 358,166,4 398,183,4 374,226,4 48,343,6 191,343,7 0,443,5 10,620,8 380,547,5.500 379,737,6 20,1058,11 319,1008,6.500 45,1200,10 342,1171,10.500 403,1245,6 39,1313,6 349,10,7"],
[1030,225,3,1.6,`M150 20Q135 25 138 35M30 246Q50 250 50 240Q100 205 150 230M30 283Q90 290 150 278M30 330Q60 305 80 318Q85 340 75 348Q50 350 30 370Q90 360 112 345Q115 332 75 330M150 390Q120 385 122 398Q135 415 130 430M30 435L120 415M30 435L85 520L150 518M85 520V600Q90 615 150 620M150 470Q120 470 115 490Q115 502 135 498M150 515Q120 530 128 550Q140 562 150 555M120 620Q105 630 130 638L150 640M150 663Q60 675 57 725Q65 775 150 785M150 708Q130 722 120 715Q90 710 88 725Q95 740 115 735Q140 740 150 728M133 750L150 752M30 838Q40 820 45 828L100 842Q112 850 108 862Q95 870 85 862L48 855Q40 860 38 868L60 878Q68 885 55 892L30 888M30 950Q110 940 112 985Q90 1015 60 1018L30 1012M30 1030Q140 1035 148 1110L30 1106M138 1040L150 1055M30 1138L60 1135L50 1150L62 1165L30 1168M30 1305Q60 1300 65 1320L92 1390Q90 1405 65 1410L30 1405M40 1460Q90 1475 100 1430Q110 1470 150 1470M45 1463Q85 1475 95 1500Q105 1475 150 1472M35 1568Q45 1550 75 1560`,
"50,12,5 42,52,4 122,78,7.500 50,130,7 115,145,7 38,592,4 134,818,5 118,908,5 130,1172,8 62,1260,11 127,1314,6.500 125,1535,8"],
[560,1180,3,2.8,`M1440 60Q1500 40 1513 85Q1520 120 1503 163L1440 125M1420 248Q1450 228 1490 230Q1530 232 1560 255M1425 262L1490 308L1560 385M1490 235Q1500 270 1560 290M1455 355Q1490 300 1560 255M1440 385Q1475 410 1560 395M1450 358Q1470 370 1480 400
M1200 585Q1155 640 1180 710Q1210 790 1300 775Q1345 762 1338 750Q1325 742 1310 752Q1260 750 1260 690Q1265 640 1320 600M1285 630Q1330 680 1380 682Q1445 680 1455 625Q1450 600 1438 560Q1450 500 1490 460Q1505 455 1492 500Q1500 550 1520 600Q1540 720 1460 780Q1420 815 1350 812Q1270 808 1190 785M1203 755Q1150 850 1195 910Q1250 950 1310 920Q1340 890 1365 870Q1415 840 1405 870Q1370 940 1310 985Q1250 1025 1150 1008L1137 1025M1137 930Q1165 965 1150 1008M1250 600Q1245 650 1275 652Q1290 640 1310 612Q1290 585 1265 595ZM1235 685Q1225 710 1255 718M1495 537Q1465 530 1468 555Q1475 578 1495 572M1515 625Q1480 630 1488 660Q1500 685 1525 678M1450 775Q1440 735 1475 725L1500 728M1338 810Q1340 770 1375 765Q1410 770 1415 795M1190 905Q1190 945 1220 945Q1240 940 1240 935M1280 935Q1300 960 1325 930L1325 915
M1560 808L1480 820Q1465 830 1465 850L1490 980Q1500 1000 1525 998L1560 993M1560 850Q1540 850 1540 870L1545 900L1560 908M1530 910Q1540 930 1560 935
M1137 1103L1172 1098L1175 1075L1255 1055Q1268 1058 1270 1077L1320 1067L1333 1078L1362 1200Q1360 1220 1345 1222L1150 1262L1138 1255M1197 1105Q1190 1095 1210 1092L1245 1083Q1260 1088 1250 1100L1210 1110ZM1350 1268Q1325 1310 1330 1330L1367 1355L1320 1345Q1290 1350 1275 1375Q1290 1340 1285 1325L1253 1290Q1300 1300 1315 1292ZM1560 1232L1537 1255L1560 1272M1137 1310Q1155 1350 1148 1370L1200 1372Q1205 1430 1137 1450M1437 1405Q1500 1380 1560 1412M1437 1405Q1450 1430 1440 1455L1417 1460Q1430 1490 1415 1505L1385 1508Q1380 1530 1390 1540M1435 1530L1460 1540M1545 1510L1515 1530L1550 1538
M95 590Q100 620 130 620L480 643Q510 645 518 590M440 588Q450 605 470 605Q485 600 490 588M540 658Q560 600 580 588M645 658Q670 620 725 588Q720 620 735 640Q770 635 755 600L735 588M600 590Q605 625 580 632L560 625M880 588Q875 630 855 658M755 658Q790 620 825 658M310 1540L318 1500Q325 1488 340 1492L490 1505Q500 1515 498 1540M785 1540Q785 1470 805 1470Q825 1480 820 1530L780 1535Q850 1510 900 1530L960 1490Q1000 1480 1000 1505Q980 1540 940 1540M1060 1470Q1065 1520 1080 1540M1075 1540Q1060 1490 1078 1470M1075 1500Q1160 1450 1190 1540M675 1470Q685 1505 700 1470
M690 207L703 224M755 207L800 224M830 207L850 224M1085 207L1150 224M1388 207L1375 224M215 222Q240 195 275 222`,
"1471,94,15 1540,12,28 62,639,14 1430,983,21 1477,1056,28 1431,1128,17 1540,1122,16 1444,1192,17 1449,1277,22 1518,1323,11 1260,1454,15 1369,1448,17 1338,1507,11 1238,1172,50 1238,1172,19 1302,1102,11 564,1478,17 354,1529,12 200,1555,18 374,208,16 436,210,20 638,222,13 1437,440,9"],
[0,2140,2.8,3,`M162 40Q170 35 205 48Q230 15 240 25L238 70Q265 80 265 88L232 102Q228 135 218 136L198 102L162 100Q160 90 178 72ZM290 40L357 50L360 0M430 55L495 65L500 0M430 55L435 0M357 85L360 55L425 65L425 95L453 98L442 196L412 192L416 162L352 155L348 187L318 184L323 85ZM566 5Q572 0 638 38L604 112L586 70Q530 85 542 160Q560 205 610 215Q680 205 685 145Q685 120 668 100Q665 75 685 75Q715 100 707 155Q700 195 670 218M566 5L580 48Q500 80 520 165Q530 195 560 218
M877 20Q840 0 800 15Q770 45 795 85Q850 130 915 105M1010 65Q970 15 920 45Q890 85 930 120Q1010 155 1078 110Q1130 150 1200 120Q1270 70 1305 0M1160 0Q1220 28 1260 0M1350 0Q1340 65 1390 78L1388 115Q1395 130 1405 115L1410 78Q1470 60 1475 15Q1465 0 1455 20Q1450 60 1410 65Q1360 60 1362 0M1380 0Q1382 38 1410 40Q1440 35 1440 0M0 35Q70 35 110 90Q160 170 90 260Q50 300 0 303M0 62Q50 70 80 105Q120 170 75 240Q50 270 0 273M8 95L0 120M8 95L30 168L0 238M60 130L82 110M42 230L55 250M0 150L22 125M0 180L27 160M180 218Q195 195 218 218M1340 218Q1430 135 1525 215L1568 205M1568 175Q1545 180 1560 210
M0 450Q25 480 18 500Q10 515 0 515M270 600Q275 565 310 567L600 567Q625 575 620 590Q600 600 540 600M330 600L615 570M670 567L677 600M1035 600Q1040 575 1042 567M1065 580L1073 567M1095 592L1110 567M1180 600Q1160 565 1120 570M1265 567Q1265 590 1275 600M1350 567Q1355 590 1345 600M1520 600L1568 575`,
"760,122,21 784,186,15 864,201,26 1048,26,16 1131,38,17 1073,197,17 1164,215,28 1271,161,16 1522,101,30 1534,10,20 15,383,14 10,583,13 84,597,15 828,583,13 977,597,14 1092,-5,10"],
[540,2140,2.904,3,`M230 100Q220 95 220 115L240 200Q250 215 258 200L308 142Q312 132 300 130ZM0 210Q40 200 45 218M45 195Q45 170 75 175Q110 190 122 218M588 165L562 65Q565 45 588 48Q625 48 620 65ZM608 172L645 95Q665 65 690 85Q705 110 690 125ZM570 170L530 80Q505 65 482 100Q480 120 490 128ZM610 182L700 155Q720 155 722 185Q720 215 700 212ZM568 182L470 152Q455 160 458 190Q460 215 475 215ZM570 195L525 218M588 195L565 218M588 195L610 218M608 195L645 218M825 218L855 198L880 218M960 153L985 165L1030 153
M1190 250L1150 290Q1115 260 1130 225Q1170 195 1230 180Q1270 180 1310 215M1250 185Q1290 145 1340 160Q1360 190 1350 213M1230 210L1270 160M1490 90Q1470 75 1470 60Q1490 45 1568 80M1480 75L1420 215M1490 95Q1520 115 1568 125M1480 70Q1500 55 1568 95M1500 290Q1540 310 1568 285M1540 0L1568 40M0 570L50 570L45 595L105 575L95 600M225 567Q235 585 250 567M315 567L325 600M345 567L352 600M410 600Q405 580 430 580L530 567M540 570L440 600M610 567L625 600M665 567Q665 580 690 575L750 567M735 600Q840 600 840 585Q830 580 740 597M885 567L888 600M925 575L950 585L975 567L985 585L1018 585L985 600M1105 600Q1090 540 1110 530L1160 515L1165 490L1215 470M1185 520Q1175 500 1220 498M1185 520Q1200 530 1240 510M1340 567Q1340 590 1350 600M1430 567Q1420 590 1400 600M1505 500L1525 567Q1560 580 1548 600M1470 600L1490 570L1525 578`,
"260,150,108 588,185,163 394,29,16 87,79,21 12,100,31 22,10,23 796,79,11 848,145,25 1071,184,16 1139,183,18 1221,592,50 1221,592,20 928,225,14 1545,360,12"],
[0,1400,2.8,3,`M258 5L268 22L272 0M340 45Q430 10 450 0M410 42L412 22M628 0Q640 20 635 45M652 0Q660 20 658 45M710 0Q718 25 710 45M955 0Q960 30 975 45M985 0Q985 30 1005 45M1083 0Q1080 30 1060 45M1105 0L1108 18L1130 15L1140 0M1215 45Q1205 20 1230 18Q1250 25 1265 45M1350 45Q1370 -20 1430 -20Q1490 -15 1505 45M1390 45Q1400 5 1430 5Q1460 10 1468 45M0 50L8 55L3 140
M58 118Q55 92 65 90L85 92M58 118Q60 125 115 127M68 122L18 195L50 380Q60 395 115 395M18 198L115 202M110 250Q90 280 90 310Q95 330 115 332M0 418L28 425L0 432M98 483Q50 490 15 530Q-5 560 0 600Q30 640 115 633M98 483L85 555Q90 575 105 540L110 520M0 680H80Q115 685 113 710M0 745L60 812L105 860L115 850M18 725L15 765M62 765L60 812M60 812L5 800M82 800Q112 770 115 740M0 865Q50 850 75 825`,
""]
];
define('chat-wallpaper', () => `<style>:host{display:block;background:#071318;height:2110px}svg{display:block}</style>
<svg width="1080" height="2110" viewBox="0 230 1080 2110" fill="none" stroke="#17262c" stroke-width="2.400" stroke-linejoin="round" stroke-linecap="round">${sheets.map(([x,y,sx,sy,d,r])=>`<g transform="translate(${x} ${y}) scale(${1/sx} ${1/sy})"><path vector-effect="non-scaling-stroke" d="${d}"/>${r.split(' ').filter(Boolean).map(c=>{const [a,b,q]=c.split(',').map(Number);const big=sy<2.5;return `<ellipse vector-effect="non-scaling-stroke" cx="${a}" cy="${b}" rx="${big?q*sx/1.25:q}" ry="${big?q*sy/1.25:q*sy/sx}"/>`}).join('')}</g>`).join('')}</svg>`);
</script>
</body>
</html>
